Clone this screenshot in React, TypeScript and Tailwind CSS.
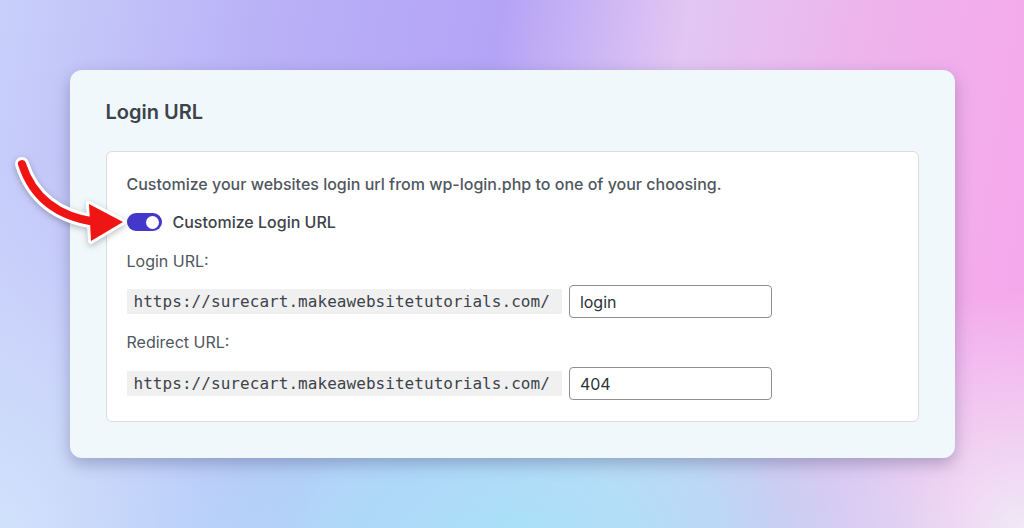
import React from 'react';

const UrlRow = ({ value }: { value: string }) => {
  return (
    <div className="flex items-center gap-[7px]">
      <code className="bg-[#f0f0f1] pl-[7px] pr-[12px] h-[25px] flex items-center text-[16px] text-[#3c434a] font-['DejaVu_Sans_Mono',monospace] tracking-[0.05px]">
        https://surecart.makeawebsitetutorials.com/
      </code>
      <div className="w-[203px] h-[33px] border border-[#8c8f94] rounded-[4px] bg-white flex items-center px-[10px] text-[16px] text-[#2c3338]">
        {value}
      </div>
    </div>
  );
};

const Arrow = () => (
  <svg className="absolute left-0 top-[140px] drop-shadow-[0_2px_3px_rgba(0,0,0,0.25)]" width="140" height="120" viewBox="0 140 140 120">
    <path d="M22 164 Q 38 214 96 222" fill="none" stroke="#fff" strokeWidth="14" strokeLinecap="round" />
    <polygon points="89,204 123,222 91,241" fill="#fff" stroke="#fff" strokeWidth="6" strokeLinejoin="round" />
    <path d="M22 164 Q 38 214 96 222" fill="none" stroke="#f01515" strokeWidth="8" strokeLinecap="round" />
    <polygon points="89,204 123,222 91,241" fill="#f01515" />
  </svg>
);

export default function App() {
  return (
    <div className="relative w-[1024px] h-[528px] overflow-hidden font-['Inter',sans-serif] bg-[radial-gradient(ellipse_45%_60%_at_50%_105%,#a8e2f9_0%,#b0e0f8cc_45%,transparent_100%),radial-gradient(ellipse_30%_70%_at_0%_100%,#d0e2fb_0%,#cfdcfbaa_50%,transparent_100%),radial-gradient(ellipse_25%_45%_at_100%_100%,#efe9f6_0%,transparent_100%),linear-gradient(100deg,#c8d0fa_0%,#b9b0f7_25%,#b4a4f6_45%,#e2c6f3_62%,#efb2ec_80%,#f6a6ec_100%)]">
      <div className="pt-[70px] flex justify-center">
        <div className="w-[885px] h-[388px] bg-[#f0f8fb] rounded-[12px] shadow-[0_6px_16px_rgba(60,70,110,0.35)] px-[36px] pt-[28px]">
          <h2 className="text-[20px] leading-[28px] font-semibold text-[#3c434a]">Login URL</h2>
          <div className="mt-[25px] bg-white border border-[#dcdcde] rounded-[6px] pl-[20px] pt-[20px] pb-[21px] flex flex-col text-[16px] font-medium text-[#50575e]">
            <p className="leading-[24px]">Customize your websites login url from wp-login.php to one of your choosing.</p>
            <div className="mt-[14px] h-[24px] flex items-center gap-[11px]">
              <div className="w-[35px] h-[18px] rounded-full bg-[#4338ca] flex items-center justify-end pr-[3px]">
                <div className="w-[13px] h-[13px] rounded-full bg-white" />
              </div>
              <span className="text-[#3c434a]">Customize Login URL</span>
            </div>
            <p className="mt-[15px] leading-[24px] font-normal">Login URL:</p>
            <div className="mt-[12px] font-normal">
              <UrlRow value="login" />
            </div>
            <p className="mt-[12px] leading-[24px] font-normal">Redirect URL:</p>
            <div className="mt-[13px] font-normal">
              <UrlRow value="404" />
            </div>
          </div>
        </div>
      </div>
      <Arrow />
    </div>
  );
}
